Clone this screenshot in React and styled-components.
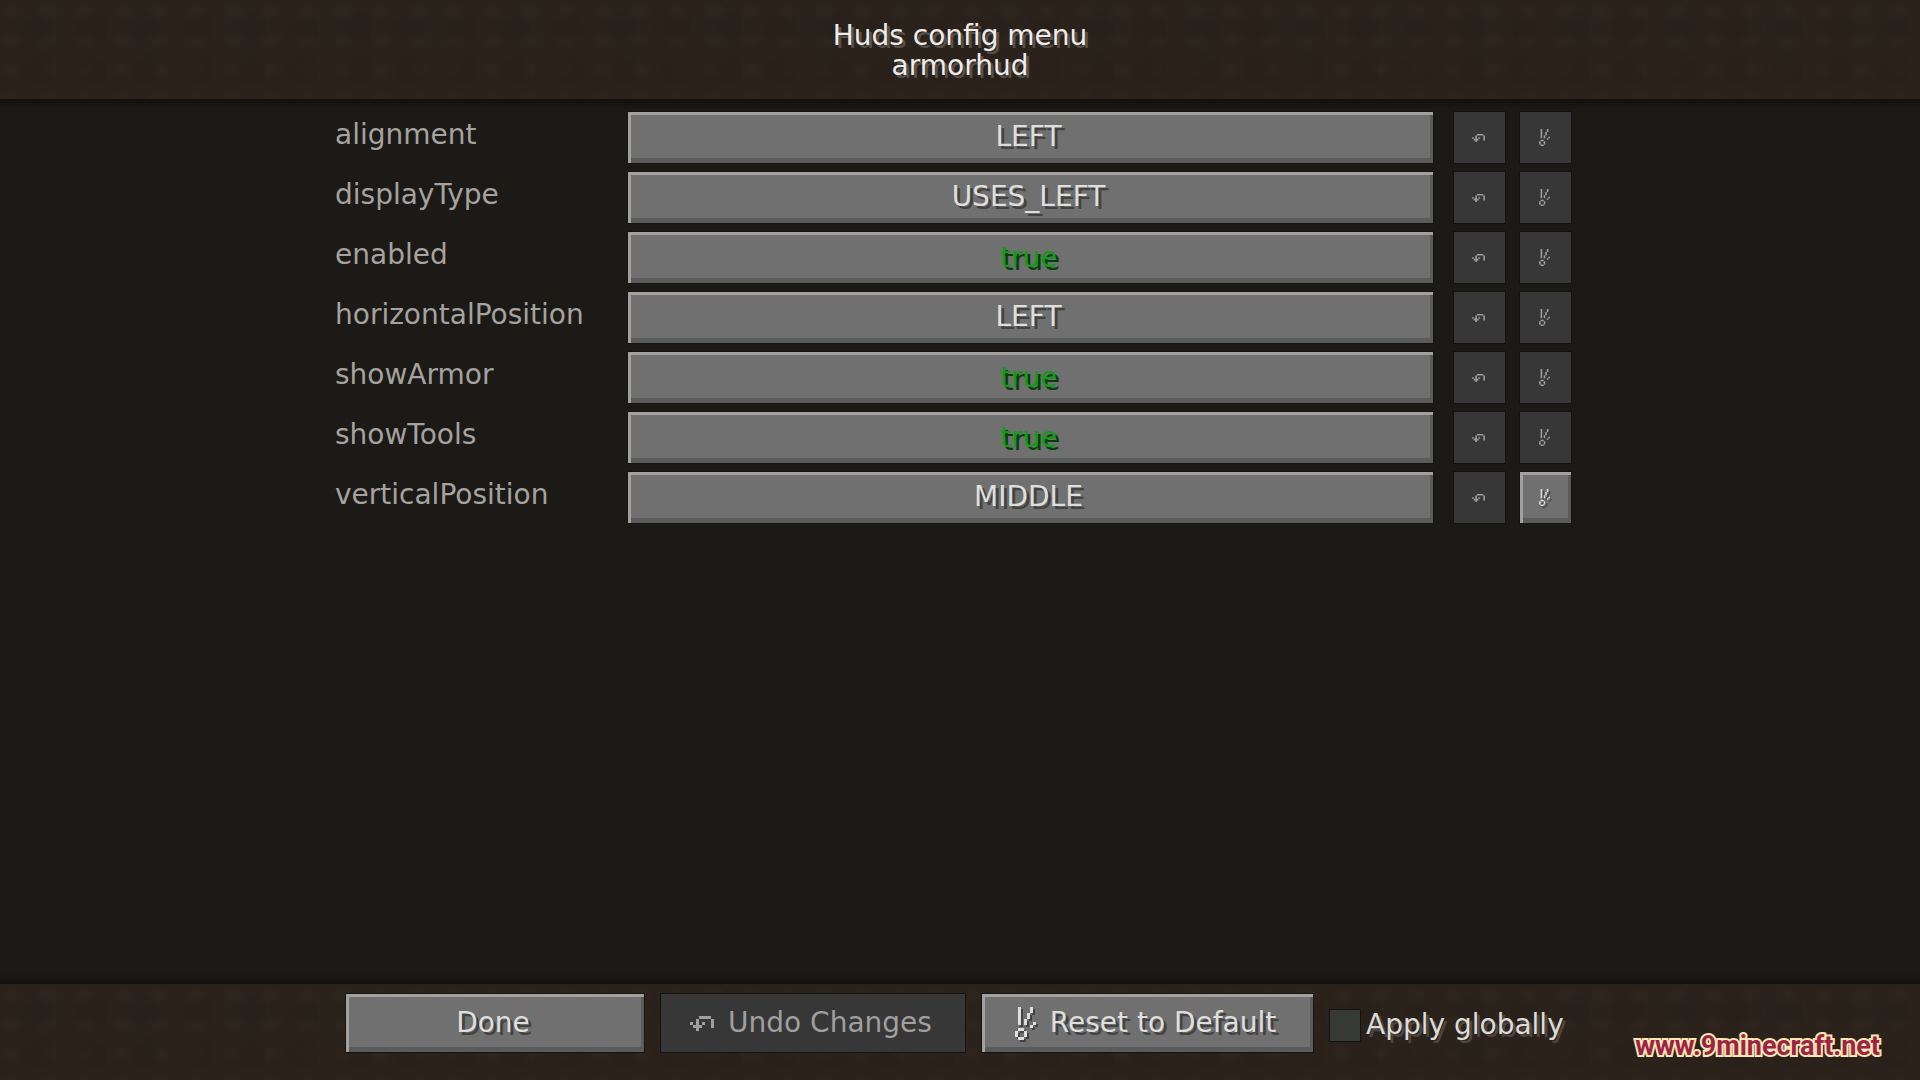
import React, { useState } from 'react'
import styled, { createGlobalStyle, css } from 'styled-components'

const GlobalStyle = createGlobalStyle`
    *{box-sizing: border-box;}
    body{margin: 0; background: #1b1a16; font-family: "DejaVu Sans", sans-serif; font-size: 28px; line-height: 30px; color: #dedbd7;}
    button{font: inherit; margin: 0; padding: 0; cursor: pointer;}
    button:disabled{cursor: default;}
`

const dirt = css`
    background-color: #2b221b;
    background-image:
        radial-gradient(ellipse at 30% 40%, rgba(62, 52, 36, 0.16), transparent 40%),
        radial-gradient(ellipse at 75% 70%, rgba(24, 18, 14, 0.18), transparent 45%),
        radial-gradient(ellipse at 50% 20%, rgba(38, 40, 34, 0.2), transparent 50%);
    background-size: 37px 29px, 53px 41px, 96px 96px;
`

const raised = css`
    background: #707070; border: 1px solid #161410; color: #dededd;
    box-shadow: inset 3px 3px 0 #a2a1a0, inset -3px -5px 0 #5a5b5b;
    text-shadow: 3px 3px 0 #434343;
    svg{filter: drop-shadow(2px 2px 0 #434343);}
`

const sunken = css`
    background: #373737; border: 1px solid #141310; color: #a09f9e;
`

const Page = styled.div`
    min-height: 100vh; display: flex; flex-direction: column; position: relative;
`

const Header = styled.header`
    ${dirt}
    padding: 21px 0 18px; text-align: center; text-shadow: 3px 3px 0 #55504b;
    h1, p{margin: 0; font-size: 28px; font-weight: normal; line-height: 30px; color: #f0ece8;}
`

const Options = styled.main`
    flex: 1; padding-top: 12px;
    box-shadow: inset 0 16px 8px -12px #11100d, inset 0 -16px 8px -12px #11100d;
`

const OptionList = styled.div`
    max-width: 1250px; margin: 0 auto; padding-right: 13px;
    display: flex; flex-direction: column; gap: 7px;
`

const OptionRow = styled.div`
    display: flex; height: 53px;
`

const OptionLabel = styled.label`
    width: 292px; flex: none; padding-top: 9px; color: #a5a29f;
`

const Actions = styled.div`
    display: flex; gap: 13px; margin-left: 19px;
`

const Button = styled.button`
    ${props => props.disabled ? sunken : raised}
    display: flex; align-items: center; justify-content: center; gap: 14px;
`

const ValueButton = styled(Button)`
    flex: 1; padding: 0 4px 2px 0;
    ${props => props.$on && css`color: #139a1b; text-shadow: 3px 3px 0 #073f0b; padding-bottom: 0;`}
`

const SquareButton = styled(Button)`
    width: 53px; padding-right: 2px;
`

const Footer = styled.footer`
    ${dirt}
    padding: 9px 0 27px;
`

const FooterBar = styled.div`
    max-width: 1230px; margin: 0 auto; display: flex; gap: 15px;
`

const FooterButton = styled(Button)`
    flex: ${props => props.$grow} 0 0; max-width: ${props => props.$grow}px; height: 60px; padding-right: 4px;
`

const CheckLabel = styled.label`
    display: flex; align-items: center; gap: 5px; padding-top: 4px; text-shadow: 3px 3px 0 #4b4640; white-space: nowrap;
`

const CheckBox = styled.input`
    ${sunken}
    appearance: none; width: 32px; height: 33px; margin: 0; background: #373937;
    &:checked{background: #8a8a88;}
`

const Watermark = styled.a`
    position: absolute; right: 40px; bottom: 15px;
    font-family: Roboto, "Liberation Sans", sans-serif; font-size: 27px; font-weight: bold; line-height: 38px;
    color: #9b2444; text-decoration: none;
    -webkit-text-stroke: 4px #fbe7b5; paint-order: stroke fill;
`

const Icon = styled.svg`
    flex: none; fill: currentColor;
`

function UndoIcon({ width, height }) {
    return (
        <Icon width={width} height={height} viewBox="0 0 8 5" aria-hidden="true">
            <path d="M3 0h4v1H3zM7 1h1v3H7zM2 1h1v4H2zM0 2h1v1H0zM4 2h1v1H4zM1 3h1v1H1zM3 3h1v1H3z" />
        </Icon>
    )
}

function ResetIcon({ width, height }) {
    return (
        <Icon width={width} height={height} viewBox="0 0 7 11" aria-hidden="true">
            <path d="M1 0h1v6H1zM5 0h1v2H5zM4 2h1v2H4zM3 4h1v2H3zM6 5h1v1H6zM5 6h1v1H5zM1 7h2v1H1zM0 8h1v2H0zM3 8h1v2H3zM1 10h2v1H1z" />
        </Icon>
    )
}

const options = [
    { name: 'alignment', value: 'LEFT' },
    { name: 'displayType', value: 'USES_LEFT' },
    { name: 'enabled', value: 'true' },
    { name: 'horizontalPosition', value: 'LEFT' },
    { name: 'showArmor', value: 'true' },
    { name: 'showTools', value: 'true' },
    { name: 'verticalPosition', value: 'MIDDLE', canReset: true }
]

function App() {
    const [global, setGlobal] = useState(false)

    return (
        <>
            <GlobalStyle />
            <Page>
                <Header>
                    <h1>Huds config menu</h1>
                    <p>armorhud</p>
                </Header>
                <Options>
                    <OptionList>
                        {options.map(({ name, value, canReset }) => (
                            <OptionRow key={name}>
                                <OptionLabel htmlFor={name}>{name}</OptionLabel>
                                <ValueButton id={name} type="button" $on={value === 'true'}>{value}</ValueButton>
                                <Actions>
                                    <SquareButton type="button" disabled aria-label={`Undo ${name}`}>
                                        <UndoIcon width={13} height={8} />
                                    </SquareButton>
                                    <SquareButton type="button" disabled={!canReset} aria-label={`Reset ${name}`}>
                                        <ResetIcon width={11} height={17} />
                                    </SquareButton>
                                </Actions>
                            </OptionRow>
                        ))}
                    </OptionList>
                </Options>
                <Footer>
                    <FooterBar>
                        <FooterButton type="button" $grow={300}>Done</FooterButton>
                        <FooterButton type="button" $grow={306} disabled>
                            <UndoIcon width={24} height={15} />
                            Undo Changes
                        </FooterButton>
                        <FooterButton type="button" $grow={333}>
                            <ResetIcon width={21} height={33} />
                            Reset to Default
                        </FooterButton>
                        <CheckLabel>
                            <CheckBox type="checkbox" checked={global} onChange={e => setGlobal(e.target.checked)} />
                            Apply globally
                        </CheckLabel>
                    </FooterBar>
                </Footer>
                <Watermark href="#">www.9minecraft.net</Watermark>
            </Page>
        </>
    )
}

export default App
